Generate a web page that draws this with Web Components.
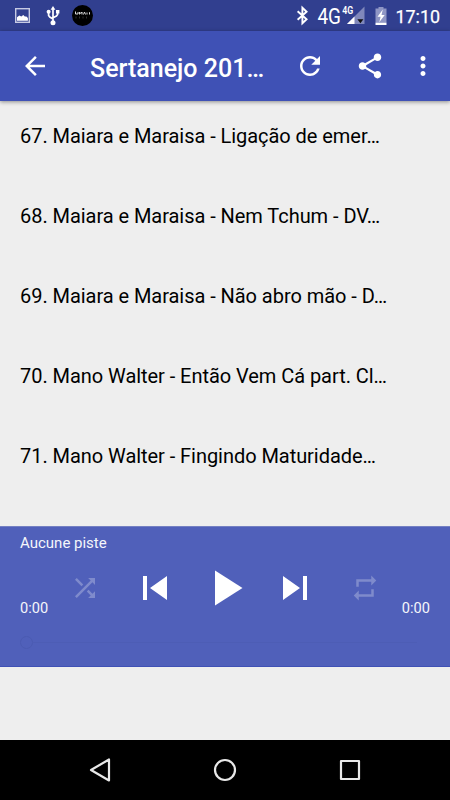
<!DOCTYPE html>
<html lang="fr">
<head>
<meta charset="utf-8">
<title>Sertanejo</title>
<style>
html,body{margin:0;padding:0}
body{width:450px;height:800px;overflow:hidden;background:#eee;font-family:Roboto,"Liberation Sans",sans-serif}
</style>
</head>
<body>
<music-app></music-app>
<script>
const define = (name, html) => {
  const t = document.createElement('template');
  t.innerHTML = html;
  customElements.define(name, class extends HTMLElement {
    constructor() {
      super();
      this.attachShadow({mode: 'open'}).appendChild(t.content.cloneNode(true));
    }
  });
};

/* Material glyphs on a 24-unit grid */
const GLYPHS = {
  back: 'M20 11H7.83l5.59-5.59L12 4l-8 8 8 8 1.41-1.41L7.83 13H20v-2z',
  refresh: 'M17.65 6.35C16.2 4.9 14.21 4 12 4c-4.42 0-7.99 3.58-7.99 8s3.57 8 7.99 8c3.73 0 6.84-2.55 7.73-6h-2.08c-.82 2.33-3.04 4-5.65 4-3.31 0-6-2.69-6-6s2.69-6 6-6c1.66 0 3.14.69 4.22 1.78L13 11h7V4l-2.35 2.35z',
  share: 'M18 16.08c-.76 0-1.44.3-1.96.77L8.91 12.7c.05-.23.09-.46.09-.7s-.04-.47-.09-.7l7.05-4.11c.54.5 1.25.81 2.04.81 1.66 0 3-1.34 3-3s-1.34-3-3-3-3 1.34-3 3c0 .24.04.47.09.7L8.04 9.81C7.5 9.31 6.79 9 6 9c-1.66 0-3 1.34-3 3s1.34 3 3 3c.79 0 1.5-.31 2.04-.81l7.12 4.16c-.05.21-.08.43-.08.65 0 1.61 1.31 2.92 2.92 2.92s2.92-1.31 2.92-2.92-1.31-2.92-2.92-2.92z',
  more: 'M12 8c1.1 0 2-.9 2-2s-.9-2-2-2-2 .9-2 2 .9 2 2 2zm0 2c-1.1 0-2 .9-2 2s.9 2 2 2 2-.9 2-2-.9-2-2-2zm0 6c-1.1 0-2 .9-2 2s.9 2 2 2 2-.9 2-2-.9-2-2-2z',
  shuffle: 'M10.59 9.17L5.41 4 4 5.41l5.17 5.17 1.42-1.41zM14.5 4l2.04 2.04L4 18.59 5.41 20 17.96 7.46 20 9.5V4h-5.5zm.33 9.41l-1.41 1.41 3.13 3.13L14.5 20H20v-5.5l-2.04 2.04-3.13-3.13z',
  previous: 'M6 6h2v12H6zm3.5 6l8.5 6V6z',
  play: 'M8 5v14l11-7z',
  next: 'M6 18l8.5-6L6 6v12zM16 6v12h2V6h-2z',
  repeat: 'M7 7h10v3l4-4-4-4v3H5v6h2V7zm10 10H7v-3l-4 4 4 4v-3h12v-6h-2v4z'
};
customElements.define('md-icon', class extends HTMLElement {
  connectedCallback() {
    const size = this.getAttribute('size') || 30;
    this.attachShadow({mode: 'open'}).innerHTML =
      `<style>:host{display:block;flex:none;width:${size}px;height:${size}px}svg{display:block}</style>
       <svg width="${size}" height="${size}" viewBox="0 0 24 24" fill="currentColor"><path d="${GLYPHS[this.getAttribute('name')]}"/></svg>`;
  }
});

define('status-bar', `
<style>
:host{display:flex;align-items:center;box-sizing:border-box;height:31px;background:#313f8f;color:#fff}
svg{display:block;width:450px;height:31px}
text{font-family:Roboto,sans-serif;fill:#fff}
</style>
<svg viewBox="0 0 450 31">
  <g fill="none" stroke="#c6cae3" stroke-width="1.4"><rect x="15.700" y="8.700" width="13.600" height="13.600"/></g>
  <path d="M17 20.800v-3.600l2.300-1.700 2 1 2-1.600 1.500 1.500h1.600l1.500 1.500v2.900z" fill="#fff"/>
  <g stroke="#fff" stroke-width="1.700" fill="none"><path d="M53 9v13M48.600 12v3.500l1.200 1.500 3.200 2M57.600 12v2.500l-1.200 1.500-3.400 1.800"/></g>
  <path d="M53 6l2.400 3.800h-4.800zM56 10h3.400v3.500h-3.400z" fill="#fff"/><circle cx="48.600" cy="11.800" r="2" fill="#fff"/><circle cx="53" cy="22.700" r="2.500" fill="#fff"/>
  <circle cx="82.500" cy="15.500" r="10.500" fill="#000"/>
  <path d="M75.500 11.500v2.500h2.500v-2M79.500 14.500V12l1.200 1.500L82 12v2.500M83.500 14.500l1-2.500 1 2.500M87 12.500v2M89.500 14.500v-2.300" stroke="#d8d8d8" stroke-width="1" fill="none"/>
  <path d="M76 16.500v2M79.500 16.500v2M83 16.500v2M86.500 16.500v2" stroke="#343434" stroke-width=".9"/>
  <path d="M297.600 11.200l9 8-4.200 4.100V7.700l4.200 4.100-9 8" stroke="#fff" stroke-width="1.900" fill="none"/>
  <text transform="translate(317.500 24.200) scale(.86 1)" font-size="22">4G</text>
  <path d="M364.500 6.500v17.500H347z" fill="#8088bb"/><path d="M347 24l7.500-7.500V24z" fill="#fff"/><path d="M357.400 19.300h6l-3 4z" fill="#111"/>
  <text transform="translate(342.300 14) scale(.84 1)" font-size="10.500" font-weight="600">4G</text>
  <path d="M378.500 7h5v1.600h3V23h-11V8.600h3z" fill="#8f96c5"/><path d="M375.500 22.800h11V25h-11z" fill="#fff"/>
  <path d="M382.800 9.500l-5.300 7.200h3.100l-1.300 5.600 5.400-7.300h-3.200z" fill="#fff"/>
  <text x="395.500" y="22.500" font-size="18" stroke="#fff" stroke-width=".25" textLength="44.500" lengthAdjust="spacingAndGlyphs">17:10</text>
</svg>`);

define('app-bar', `
<style>
:host{display:flex;align-items:center;position:relative;box-sizing:border-box;height:70px;padding:0 12.500px 0 20px;background:#3f51b5;color:#fff;box-shadow:0 1px 4px rgba(0,0,0,.42)}
h1{flex:none;width:175px;margin:0 30px 0 40px;padding-top:5px;font-size:25px;line-height:30px;font-weight:500;white-space:nowrap}
.refresh{margin-right:30px}.share{margin-right:22.500px}
</style>
<md-icon name="back"></md-icon>
<h1><slot></slot></h1>
<md-icon class="refresh" name="refresh"></md-icon>
<md-icon class="share" name="share"></md-icon>
<md-icon name="more"></md-icon>`);

define('track-row', `
<style>
:host{display:block;box-sizing:border-box;height:80px;padding:20px 20px 0;font-size:20px;line-height:30px;letter-spacing:-.05px;color:#000;white-space:nowrap}
</style><slot></slot>`);

define('track-list', `
<style>:host{display:block;flex:none;height:425px;overflow:hidden}</style><slot></slot>`);

define('player-panel', `
<style>
:host{display:block;position:relative;box-sizing:border-box;flex:none;height:141px;padding:7px 20px 0;background:#5060ba;border-top:1px solid #7480c2;border-bottom:1px solid #3f51b5;color:#f5f6fb;font-size:15px;line-height:18px}
.controls{display:grid;grid-template-columns:repeat(5,70px);justify-content:center;justify-items:center;align-items:center;height:61px;margin-top:-2px;padding-top:7px;color:#fff}
.off{color:#7f8bcc}
.times{display:flex;justify-content:space-between;margin-top:-19px;font-size:14.600px}
.seek{display:flex;align-items:center;margin-top:19px}
.seek i{box-sizing:border-box;width:13px;height:13px;border:1.500px solid #4b5bb2;border-radius:50%}
.seek b{width:384px;height:1px;background:#4d5db5}
</style>
<div><slot name="track"></slot></div>
<div class="controls">
  <md-icon class="off" name="shuffle"></md-icon>
  <md-icon name="previous" size="48"></md-icon>
  <md-icon name="play" size="60"></md-icon>
  <md-icon name="next" size="48"></md-icon>
  <md-icon class="off" name="repeat"></md-icon>
</div>
<div class="times"><slot name="elapsed"></slot><slot name="total"></slot></div>
<div class="seek"><i></i><b></b></div>`);

define('nav-bar', `
<style>
:host{display:grid;grid-template-columns:repeat(3,125px);justify-content:center;justify-items:center;align-items:center;flex:none;height:60px;background:#000}
svg{display:block;width:30px;height:30px;fill:none;stroke:#e8e8e8;stroke-width:2.200;stroke-linejoin:round}
</style>
<svg viewBox="0 0 30 30"><path d="M6 15L24 4.500v21z"/></svg>
<svg viewBox="0 0 30 30"><circle cx="15" cy="15" r="10"/></svg>
<svg viewBox="0 0 30 30"><rect x="6" y="6" width="18" height="18"/></svg>`);

define('music-app', `
<style>
:host{display:flex;flex-direction:column;width:450px;height:800px;background:#eee}
.gap{flex:1}
status-bar,app-bar,nav-bar{flex:none}
</style>
<status-bar></status-bar>
<app-bar>Sertanejo 201…</app-bar>
<track-list>
  <track-row>67. Maiara e Maraisa - Ligação de emer…</track-row>
  <track-row>68. Maiara e Maraisa - Nem Tchum - DV…</track-row>
  <track-row>69. Maiara e Maraisa - Não abro mão - D…</track-row>
  <track-row>70. Mano Walter - Então Vem Cá part. Cl…</track-row>
  <track-row>71. Mano Walter - Fingindo Maturidade…</track-row>
</track-list>
<player-panel>
  <span slot="track">Aucune piste</span>
  <span slot="elapsed">0:00</span>
  <span slot="total">0:00</span>
</player-panel>
<div class="gap"></div>
<nav-bar></nav-bar>`);
</script>
</body>
</html>
